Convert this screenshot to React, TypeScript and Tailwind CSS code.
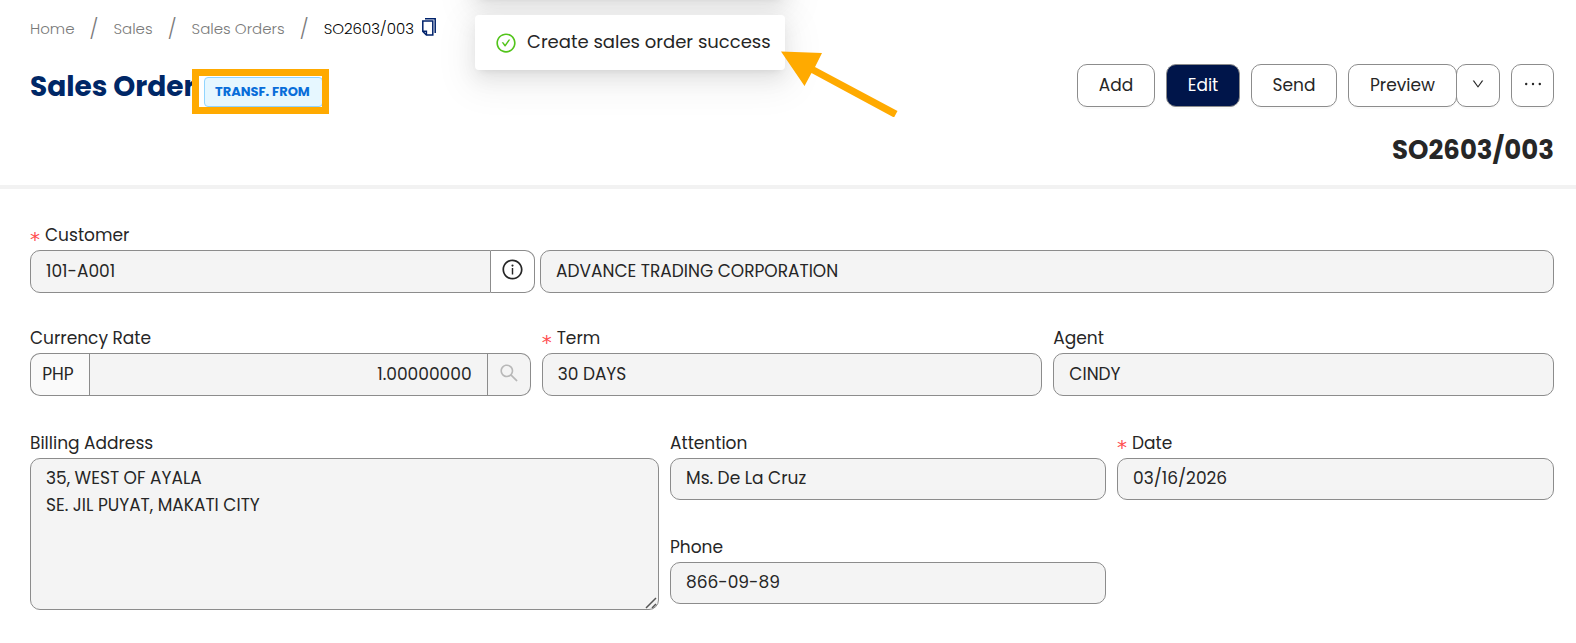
import type { ReactNode } from "react";
import { AiOutlineCheckCircle, AiOutlineDown, AiOutlineInfoCircle, AiOutlineSearch } from "react-icons/ai";
import clsx from "clsx";

const crumbs = ["Home", "Sales", "Sales Orders"];

const boxClass = "w-full min-w-0 border border-[#8c8c8c] bg-[#f4f4f4] px-[15px] pb-0.5 text-[17px] text-[#262626] outline-none";
const buttonClass = "flex h-[43px] items-center justify-center rounded-[10px] border border-[#8c8c8c] text-[17px] shadow-[0_2px_0_rgba(0,0,0,0.02)]";

function CopyIcon() {
    return (
        <svg viewBox="0 0 14 18" className="h-[18px] w-[14px]" fill="none" stroke="#00226b" strokeWidth="1.5">
            <path d="M3 0.8H13.2V15" />
            <path d="M0.8 3H10.8V17H4.4L0.8 13.4Z" />
            <path d="M0.8 13.2H4.4V17" />
        </svg>
    );
}

function Field({ id, label, required, className, children }: {
    id: string;
    label: string;
    required?: boolean;
    className?: string;
    children: ReactNode;
}) {
    return (
        <div className={className}>
            <label htmlFor={id} className="flex h-7 text-[17px] leading-[26px]">
                {required && <span className="mr-1 w-[11px] font-['DejaVu_Sans',sans-serif] text-xl leading-[34px] text-[#ff4d4f]">*</span>}
                {label}
            </label>
            {children}
        </div>
    );
}

function Breadcrumb() {
    return (
        <nav className="flex h-6 items-center text-[15px] font-light text-[#7a7a7a]">
            {crumbs.map((crumb) => (
                <div key={crumb} className="flex items-center">
                    <a href="#">{crumb}</a>
                    <span className="w-[39px] text-center text-xl leading-6">/</span>
                </div>
            ))}
            <span className="text-black">SO2603/003</span>
            <button type="button" aria-label="Copy order number" className="mb-1 ml-2">
                <CopyIcon />
            </button>
        </nav>
    );
}

function Toast() {
    const shadow = "shadow-[0_4px_8px_-5px_rgba(0,0,0,0.12),0_8px_20px_rgba(0,0,0,0.08),0_11px_35px_10px_rgba(0,0,0,0.05)]";
    return (
        <div className="pointer-events-none absolute left-[475px] top-[-57px] flex w-[310px] flex-col gap-[17px]">
            <div className={clsx("h-[55px] rounded bg-white", shadow)} />
            <div role="status" className={clsx("flex h-[55px] items-center gap-2.5 rounded bg-white pl-5 text-lg", shadow)}>
                <AiOutlineCheckCircle className="size-[22px] text-[#52c41a]" />
                <span className="whitespace-nowrap pb-0.5">Create sales order success</span>
            </div>
        </div>
    );
}

export default function App() {
    return (
        <div className="relative overflow-hidden bg-white font-['Poppins','Inter',sans-serif] text-[#262626]">
            <header className="border-b-4 border-[#f2f2f2] pb-[15px] pl-[30px] pr-[22px] pt-[17px]">
                <Breadcrumb />
                <div className="mt-[23px] flex items-center justify-between">
                    <div className="relative flex items-center">
                        <h1 className="w-[174px] whitespace-nowrap pt-0.5 text-[28px] font-bold leading-[41px] text-[#002766]">Sales Order</h1>
                        <span className="mt-3 flex h-[30px] w-[119px] items-center rounded-sm border border-[#91d5ff] bg-[#e6f7ff] pl-2.5 text-[13px] font-bold text-[#096dd9]">
                            TRANSF. FROM
                        </span>
                        <div className="absolute left-[162px] top-[5px] h-[45px] w-[137px] border-[7px] border-[#ffaa00]" />
                    </div>
                    <div className="flex gap-[11px]">
                        <button type="button" className={clsx(buttonClass, "w-[78px]")}>Add</button>
                        <button type="button" className={clsx(buttonClass, "w-[74px] bg-[#00154a] text-white")}>Edit</button>
                        <button type="button" className={clsx(buttonClass, "w-[86px]")}>Send</button>
                        <div className="flex">
                            <button type="button" className={clsx(buttonClass, "w-[109px]")}>Preview</button>
                            <button type="button" aria-label="More previews" className={clsx(buttonClass, "-ml-px w-11")}>
                                <AiOutlineDown className="mb-1 size-3.5" />
                            </button>
                        </div>
                        <button type="button" aria-label="More actions" className={clsx(buttonClass, "w-[43px]")}>
                            <svg viewBox="0 0 16 4" className="mb-1 h-1 w-4" fill="currentColor">
                                <circle cx="1.2" cy="2" r="1.2" />
                                <circle cx="8" cy="2" r="1.2" />
                                <circle cx="14.8" cy="2" r="1.2" />
                            </svg>
                        </button>
                    </div>
                </div>
                <p className="mt-[23px] text-right text-[26px] font-bold leading-10">SO2603/003</p>
            </header>

            <Toast />
            <svg viewBox="0 0 120 66" className="pointer-events-none absolute left-[780px] top-[51px] h-[66px] w-[120px]" fill="#ffaa00">
                <path d="M1 0.5L42 2L35 16L117.500 60L114 66.500L31.500 22L24.500 35Z" />
            </svg>

            <form className="flex flex-col gap-8 px-[30px] pb-8 pt-[33px] pr-[22px]">
                <div className="flex items-end gap-[5px]">
                    <Field id="customer" label="Customer" required className="w-[505px]">
                        <div className="flex">
                            <input id="customer" readOnly defaultValue="101-A001" className={clsx(boxClass, "h-[43px] rounded-l-[10px]")} />
                            <button type="button" aria-label="Customer info" className="flex h-[43px] w-11 shrink-0 items-center justify-center rounded-r-[10px] border border-l-0 border-[#8c8c8c] bg-white">
                                <AiOutlineInfoCircle className="mb-1 size-[23px]" />
                            </button>
                        </div>
                    </Field>
                    <input aria-label="Customer name" readOnly defaultValue="ADVANCE TRADING CORPORATION" className={clsx(boxClass, "h-[43px] flex-1 rounded-[10px]")} />
                </div>

                <div className="grid grid-cols-3 gap-[11px]">
                    <Field id="rate" label="Currency Rate">
                        <div className="flex">
                            <span className="flex h-[43px] w-[59px] shrink-0 items-center justify-center rounded-l-[10px] border border-r-0 border-[#8c8c8c] bg-[#fafafa] pr-1 text-[17px]">PHP</span>
                            <input id="rate" readOnly defaultValue="1.00000000" className={clsx(boxClass, "h-[43px] text-right")} />
                            <button type="button" aria-label="Search rate" className="flex h-[43px] w-[43px] shrink-0 items-center justify-center rounded-r-[10px] border border-l-0 border-[#8c8c8c] bg-[#f4f4f4] text-[#b8b8b8]">
                                <AiOutlineSearch className="mb-1 size-[22px]" />
                            </button>
                        </div>
                    </Field>
                    <Field id="term" label="Term" required>
                        <input id="term" readOnly defaultValue="30 DAYS" className={clsx(boxClass, "h-[43px] rounded-[10px]")} />
                    </Field>
                    <Field id="agent" label="Agent">
                        <input id="agent" readOnly defaultValue="CINDY" className={clsx(boxClass, "h-[43px] rounded-[10px]")} />
                    </Field>
                </div>

                <div className="grid grid-cols-[629fr_436fr_437fr] grid-rows-[auto_1fr] gap-x-[11px] pt-0.5">
                    <Field id="billing" label="Billing Address" className="row-span-2">
                        <div className="relative">
                            <textarea
                                id="billing"
                                readOnly
                                defaultValue={"35, WEST OF AYALA\nSE. JIL PUYAT, MAKATI CITY"}
                                className="block h-[152px] w-full resize-none rounded-[10px] border border-[#8c8c8c] bg-[#f4f4f4] px-[15px] py-1.5 text-[17px] leading-[27px] outline-none"
                            />
                            <svg viewBox="0 0 12 12" className="pointer-events-none absolute bottom-px right-0.5 size-3" fill="none" stroke="#555" strokeWidth="1.5">
                                <path d="M1 11L11 1M7 11L11 7" />
                            </svg>
                        </div>
                    </Field>
                    <Field id="attention" label="Attention">
                        <input id="attention" readOnly defaultValue="Ms. De La Cruz" className={clsx(boxClass, "h-[42px] rounded-[10px]")} />
                    </Field>
                    <Field id="date" label="Date" required>
                        <input id="date" readOnly defaultValue="03/16/2026" className={clsx(boxClass, "h-[42px] rounded-[10px]")} />
                    </Field>
                    <Field id="phone" label="Phone" className="mt-[34px]">
                        <input id="phone" readOnly defaultValue="866-09-89" className={clsx(boxClass, "h-[42px] rounded-[10px]")} />
                    </Field>
                </div>
            </form>
        </div>
    );
}
